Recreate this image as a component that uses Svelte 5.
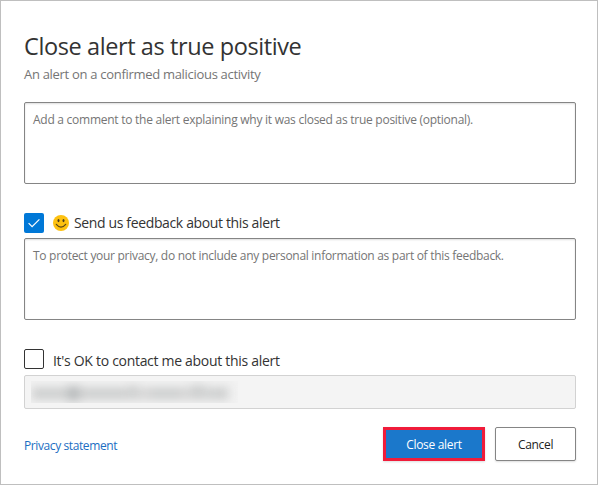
<script>
  let comment = $state('');
  let feedback = $state('');
</script>

<main class="dialog">
  <h1><span>Close alert as true positive</span></h1>
  <p class="subtitle"><span>An alert on a confirmed malicious activity</span></p>

  <textarea class="box" bind:value={comment} placeholder="Add a comment to the alert explaining why it was closed as true positive (optional)."></textarea>

  <div class="option first">
    <span class="check on">
      <svg width="20" height="20" viewBox="0 0 20 20"><path d="M4.6 10.2 8.1 13.7 15.4 6.4" fill="none" stroke="#fff" stroke-width="1.2" /></svg>
    </span>
    <svg class="smile" width="16" height="16" viewBox="0 0 16 16">
      <circle cx="8" cy="8" r="8" fill="#fdc110" />
      <ellipse cx="5.5" cy="5.6" rx="1" ry="1.7" fill="#4a3b1c" />
      <ellipse cx="10.5" cy="5.6" rx="1" ry="1.7" fill="#4a3b1c" />
      <path d="M3.3 9.3Q8 14.8 12.7 9.3" fill="none" stroke="#5a4518" stroke-width="1.2" stroke-linecap="round" />
    </svg>
    <span class="label send">Send us feedback about this alert</span>
  </div>

  <textarea class="box second" bind:value={feedback} placeholder="To protect your privacy, do not include any personal information as part of this feedback."></textarea>

  <div class="option contact">
    <span class="check"></span>
    <span class="label ok">It's OK to contact me about this alert</span>
  </div>

  <div class="email">
    <div class="redacted">
      <svg width="207" height="22" viewBox="0 0 207 22">
        <g class="smudge" fill="#cccece">
          <rect x="0" y="6" width="198" height="13" fill="#d6d6d6" />
          <rect x="3" y="8" width="30" height="9" />
          <rect x="36" y="5" width="13" height="15" fill="#b8bbbc" />
          <rect x="53" y="8" width="43" height="9" />
          <rect x="98" y="4" width="8" height="13" />
          <rect x="120" y="8" width="30" height="9" />
          <rect x="160" y="4" width="14" height="13" />
          <rect x="178" y="8" width="18" height="9" />
        </g>
      </svg>
    </div>
  </div>

  <footer>
    <a href="#privacy"><span>Privacy statement</span></a>
    <div class="actions">
      <button class="primary"><span>Close alert</span></button>
      <button class="secondary"><span>Cancel</span></button>
    </div>
  </footer>
</main>

<style>
  :global(body) { background: #fff; }
  .dialog {
    box-sizing: border-box;
    width: 598px;
    height: 485px;
    padding: 29px 21px 0 23px;
    border: 1px solid #bfbfbf;
    font-family: "Open Sans", "Noto Sans", sans-serif;
    color: #333;
    overflow: hidden;
  }
  h1 {
    margin: 0;
    height: 32px;
    line-height: 32px;
    font-size: 23.5px;
    font-weight: 400;
    letter-spacing: -0.4px;
    white-space: nowrap;
  }
  .subtitle {
    margin: 3px 0 18px;
    height: 19px;
    line-height: 19px;
    font-size: 13px;
    letter-spacing: -0.3px;
    color: #757575;
  }
  .box {
    display: block;
    box-sizing: border-box;
    width: 552px;
    height: 82px;
    margin: 0;
    padding: 8px;
    border: 1px solid #858585;
    border-radius: 2px;
    box-shadow: inset 0 1px 2px #ddd;
    resize: none;
    outline: none;
    font: 12px/18px "Open Sans", "Noto Sans", sans-serif;
    letter-spacing: -0.26px;
  }
  .box::placeholder { color: #757575; opacity: 1; white-space: nowrap; }
  .option { display: flex; align-items: center; height: 20px; }
  .first { margin-top: 29px; }
  .contact { margin-top: 29px; }
  .second { margin-top: 5px; letter-spacing: -0.29px; }
  .check {
    box-sizing: border-box;
    width: 20px;
    height: 20px;
    border: 1px solid #333;
    border-radius: 2px;
  }
  .check.on { border: 0; background: #0078d7; }
  .check svg { display: block; }
  .smile { margin: 0 5px 0 9px; }
  .label { font-size: 14px; line-height: 20px; white-space: nowrap; }
  .send { letter-spacing: -0.36px; }
  .ok { margin: 4px 0 0 9px; letter-spacing: -0.3px; }
  .email {
    box-sizing: border-box;
    width: 552px;
    height: 34px;
    margin-top: 6px;
    padding: 5px 6px;
    border: 1px solid #d2d2d2;
    border-radius: 2px;
    background: #f4f4f4;
  }
  .redacted { width: 207px; height: 22px; background: #f2f2f2; overflow: hidden; }
  .redacted svg { display: block; }
  .smudge { filter: blur(5px); }
  footer { display: flex; justify-content: space-between; margin-top: 18px; width: 552px; }
  a {
    margin-top: 9px;
    font-size: 12px;
    line-height: 20px;
    letter-spacing: -0.4px;
    color: #1b6ec2;
    text-decoration: none;
  }
  .actions { display: flex; gap: 10px; }
  button {
    box-sizing: border-box;
    height: 34px;
    padding: 2px 0 0;
    font: 12px/18px "Open Sans", "Noto Sans", sans-serif;
    letter-spacing: -0.32px;
    box-shadow: 0 1px 2px #ddd;
  }
  .primary { width: 102px; border: 3px solid #f01c3a; background: #1b78cb; color: #fff; }
  .secondary { width: 81px; border: 1px solid #858585; border-radius: 2px; background: #fff; color: #222; }
</style>
